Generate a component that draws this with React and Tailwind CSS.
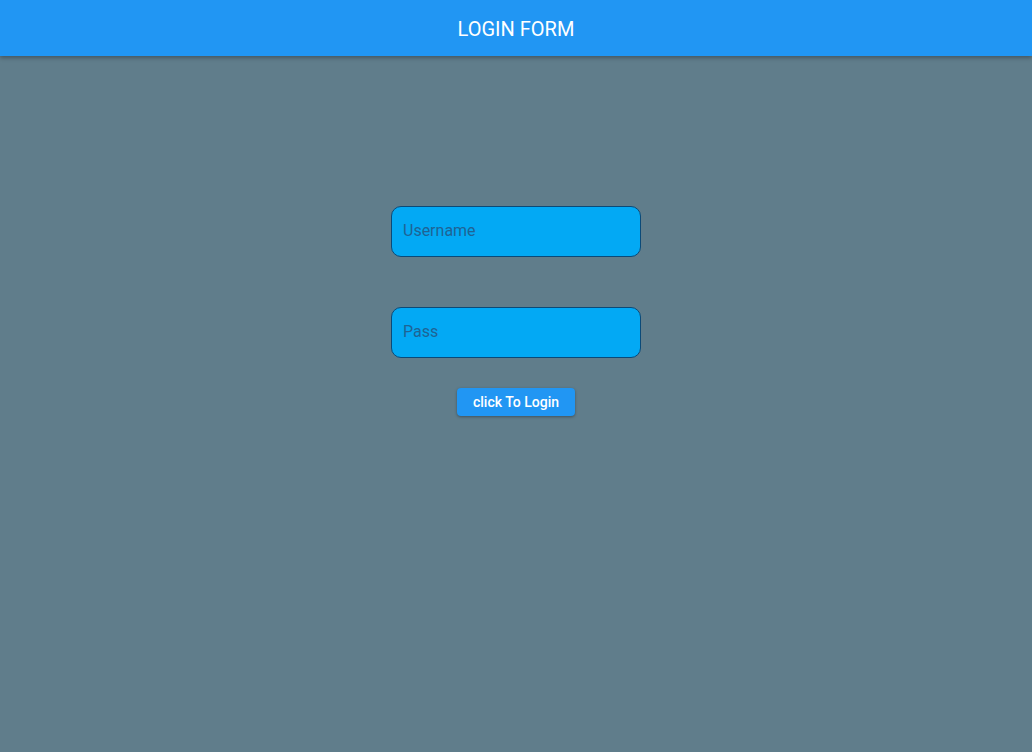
export default function App() {
  return (
    <div className="min-h-[752px] bg-[#607d8b] font-['Roboto',sans-serif]">
      <header className="h-14 pt-0.5 bg-[#2196f3] flex items-center justify-center shadow-[0_2px_4px_rgba(0,0,0,0.3)] relative z-10">
        <h1 className="text-white text-[20px] leading-none">LOGIN FORM</h1>
      </header>
      <form className="flex flex-col items-center pt-[150px]" onSubmit={(e) => e.preventDefault()}>
        <input
          type="text"
          placeholder="Username"
          className="w-[250px] h-[51px] rounded-[10px] border border-[#0b4a78] bg-[#03a9f4] px-[11px] pb-0.5 text-base text-[#0d3f66] placeholder:text-[#1f6394] outline-none"
        />
        <input
          type="password"
          placeholder="Pass"
          className="mt-[50px] w-[250px] h-[51px] rounded-[10px] border border-[#0b4a78] bg-[#03a9f4] px-[11px] pb-0.5 text-base text-[#0d3f66] placeholder:text-[#1f6394] outline-none"
        />
        <button
          type="submit"
          className="mt-[30px] w-[118px] h-7 rounded bg-[#2196f3] text-white text-sm font-medium shadow-[0_1px_3px_rgba(0,0,0,0.35)]"
        >
          click To Login
        </button>
      </form>
    </div>
  );
}
